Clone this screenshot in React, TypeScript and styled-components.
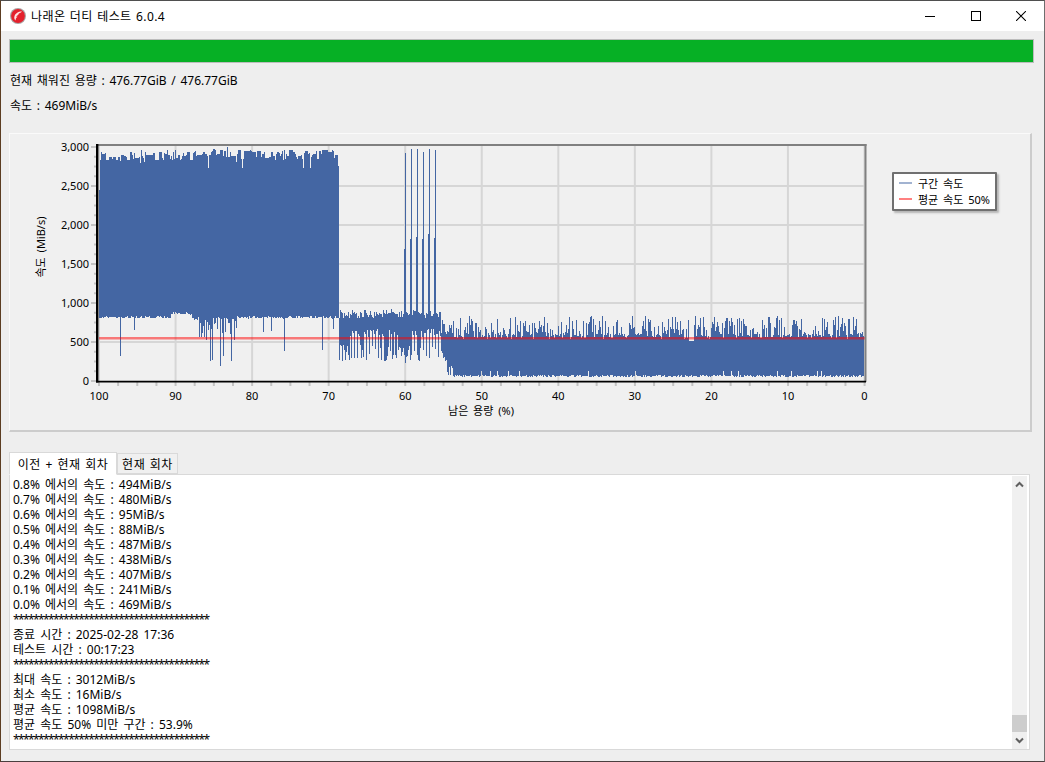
import styled, { createGlobalStyle } from "styled-components";

const FONT = `"Noto Sans", "Noto Sans CJK KR", sans-serif`;
const BLUE = "#4466a3";
const GRID = "#d6d6d6";
const TICK = "#c4c4c4";

const GlobalStyle = createGlobalStyle`
  html, body {
    margin: 0;
    padding: 0;
    background: #eeeeee;
    font-family: ${FONT};
    font-size: 12px;
    color: #000;
  }
`;

// seeded so the picture is the same on each load
const makeRandom = (seed: number) => () => {
  seed = (seed + 0x6d2b79f5) | 0;
  let t = Math.imul(seed ^ (seed >>> 15), 1 | seed);
  t = (t + Math.imul(t ^ (t >>> 7), 61 | t)) ^ t;
  return ((t ^ (t >>> 14)) >>> 0) / 4294967296;
};

const FAST_DIPS: Record<number, number> = {
  120: 356, 134: 330, 199: 337, 201: 337, 206: 340, 210: 361, 212: 360, 220: 366, 223: 356,
  231: 361, 234: 340, 236: 328, 263: 332, 271: 331, 284: 351, 322: 350, 333: 329,
};

const SPIKES = [
  { x: 405, thin: 153, thick: 249 },
  { x: 411, thin: 149, thick: 239 },
  { x: 417, thin: 149, thick: 237 },
  { x: 423, thin: 152, thick: 239 },
  { x: 429, thin: 149, thick: 234 },
  { x: 435, thin: 150, thick: 238 },
];

const buildSeries = () => {
  const rnd = makeRandom(41);
  const cols: string[] = [];
  let top = 154;
  for (let x = 99; x < 864; x++) {
    let hi = 0;
    let lo = 0;
    if (x < 339) {
      // fast cache part
      const shift = x > 195 && x < 235 ? -3 : x < 130 ? 1 : 0;
      if (rnd() < 0.6) top = 150 + shift + rnd() * 10;
      hi = top;
      if (rnd() < 0.02) hi += 6;
      if (x < 100) hi = 190;
      else if ([208, 242, 303, 310].includes(x)) hi = 168;
      else if (x === 338) hi = 166;
      lo = 316 + rnd() * 2.5;
      if (x > 170 && x < 192) lo = 312 + rnd() * 3;
      if (x >= 192 && x < 199) lo = 317 + rnd() * 5;
      if (x >= 199 && x < 236) lo = 317 + Math.pow(rnd(), 2) * 20;
      if (FAST_DIPS[x]) lo = FAST_DIPS[x];
    } else if (x < 441) {
      // after the cache, solid with a comb of teeth below
      hi = 309 + rnd() * 9;
      if (x < 350) {
        lo = 343 + rnd() * 20;
      } else if (x >= 398 && x < 412) {
        lo = 345 + rnd() * 20;
      } else if (x % 3 === 0 || rnd() < 0.12) {
        lo = 345 + rnd() * 17;
      } else {
        lo = 328 + rnd() * 9;
      }
    } else if (x < 453) {
      hi = 320 + rnd() * 14;
      lo = x < 447 ? 350 + rnd() * 12 : 366 + rnd() * 10;
    } else {
      // slow part, spiky top over a solid block
      const r = rnd();
      hi = r < 0.32 ? 316 + rnd() * 10 : r < 0.65 ? 326 + rnd() * 9 : 334 + rnd() * 5;
      lo = 375 + rnd() * 2;
      if (rnd() < 0.03) lo = 371;
      if (x > 688 && x < 694) hi = 341;
    }
    cols.push(`M${x + 0.5} ${hi.toFixed(1)}V${lo.toFixed(1)}`);
  }
  return cols.join("");
};

const SERIES = buildSeries();

const xPos = (pct: number) => 99 + ((100 - pct) / 100) * 765.5;
const yPos = (val: number) => 381 - (val / 500) * 39;

const X_LABELS = [100, 90, 80, 70, 60, 50, 40, 30, 20, 10, 0];
const Y_LABELS = [
  { v: 3000, t: "3,000" },
  { v: 2500, t: "2,500" },
  { v: 2000, t: "2,000" },
  { v: 1500, t: "1,500" },
  { v: 1000, t: "1,000" },
  { v: 500, t: "500" },
  { v: 0, t: "0" },
];

const SPEED_ROWS = [
  "0.8% 에서의 속도 : 494MiB/s",
  "0.7% 에서의 속도 : 480MiB/s",
  "0.6% 에서의 속도 : 95MiB/s",
  "0.5% 에서의 속도 : 88MiB/s",
  "0.4% 에서의 속도 : 487MiB/s",
  "0.3% 에서의 속도 : 438MiB/s",
  "0.2% 에서의 속도 : 407MiB/s",
  "0.1% 에서의 속도 : 241MiB/s",
  "0.0% 에서의 속도 : 469MiB/s",
];
const STARS = "*".repeat(39);
const LOG_ROWS = [
  ...SPEED_ROWS,
  STARS,
  "종료 시간 : 2025-02-28 17:36",
  "테스트 시간 : 00:17:23",
  STARS,
  "최대 속도 : 3012MiB/s",
  "최소 속도 : 16MiB/s",
  "평균 속도 : 1098MiB/s",
  "평균 속도 50% 미만 구간 : 53.9%",
  STARS,
];

const AppIcon = () => (
  <svg width="16" height="16" viewBox="0 0 16 16">
    <circle cx="8" cy="8" r="8" fill="#a9a3a3" />
    <circle cx="8" cy="8" r="6.9" fill="#e4202c" />
    <path d="M12 3.6C8.600 3.400 5 5.400 4.300 9c-.2 1.400.3 2.600 1.300 3.400.1-1.800.8-3 2.200-3.600-.6-.2-1.200-.2-1.600 0 .4-1.200 1.500-1.900 2.800-2.100-.4-.2-.9-.3-1.300-.2C9 5.300 10.600 5 12 3.600z" fill="#ffe3e3" />
  </svg>
);

const MinimizeIcon = () => (
  <svg width="10" height="10" viewBox="0 0 10 10" shapeRendering="crispEdges">
    <path d="M0 5.5H10" stroke="#000" />
  </svg>
);

const MaximizeIcon = () => (
  <svg width="10" height="10" viewBox="0 0 10 10" shapeRendering="crispEdges">
    <rect x="0.5" y="0.5" width="9" height="9" fill="none" stroke="#000" />
  </svg>
);

const CloseIcon = () => (
  <svg width="10" height="10" viewBox="0 0 10 10">
    <path d="M0 0L10 10M10 0L0 10" stroke="#000" strokeWidth="1.05" />
  </svg>
);

const Chevron = ({ down }: { down?: boolean }) => (
  <svg width="9" height="7" viewBox="0 0 9 7">
    <path d={down ? "M1 1.5L4.5 5L8 1.5" : "M1 5.5L4.5 2L8 5.5"} fill="none" stroke="#606060" strokeWidth="2" />
  </svg>
);

function yTickStart(i: number) {
  return i % 4 === 0 ? 91 : 94;
}

const Chart = () => (
  <ChartSvg width="880" height="296" viewBox="10 134 880 296">
    {X_LABELS.map((p) => (
      <line key={p} x1={xPos(p)} x2={xPos(p)} y1={146} y2={381} stroke={GRID} strokeWidth="2" />
    ))}
    {Y_LABELS.slice(1, 6).map((l) => (
      <line key={l.v} x1={99} x2={865} y1={yPos(l.v)} y2={yPos(l.v)} stroke={GRID} strokeWidth="2" />
    ))}

    <path d={SERIES} stroke={BLUE} strokeWidth="1" fill="none" shapeRendering="crispEdges" />
    {SPIKES.map((s) => (
      <g key={s.x} shapeRendering="crispEdges">
        <line x1={s.x + 0.5} x2={s.x + 0.5} y1={s.thin} y2={320} stroke={BLUE} />
        <line x1={s.x - 0.5} x2={s.x - 0.5} y1={s.thick} y2={320} stroke={BLUE} />
      </g>
    ))}
    <line x1={99} x2={865} y1={338.2} y2={338.2} stroke="#ff0000" strokeOpacity="0.5" strokeWidth="2.4" />

    {Array.from({ length: 25 }, (_, i) => (
      <line key={i} x1={yTickStart(i)} x2={96} y1={147 + i * 9.75} y2={147 + i * 9.75} stroke={TICK} strokeWidth="2" />
    ))}
    {Array.from({ length: 41 }, (_, i) => (
      <line key={i} x1={99 + i * 19.14} x2={99 + i * 19.14} y1={382} y2={386} stroke={TICK} strokeWidth="2" />
    ))}

    <line x1={96} x2={866.5} y1={145} y2={145} stroke="#808080" strokeWidth="2" />
    <line x1={865.5} x2={865.5} y1={144} y2={382} stroke="#808080" strokeWidth="2" />
    <line x1={97.2} x2={97.2} y1={144} y2={382.5} stroke="#000" strokeWidth="2.4" />
    <line x1={96} x2={866} y1={381.7} y2={381.7} stroke="#000" strokeWidth="1.8" />

    {Y_LABELS.map((l) => (
      <AxisText key={l.v} x={89} y={yPos(l.v) + 4} textAnchor="end">
        {l.t}
      </AxisText>
    ))}
    {X_LABELS.map((p) => (
      <AxisText key={p} x={xPos(p)} y={400} textAnchor="middle">
        {p}
      </AxisText>
    ))}
    <AxisText x={481} y={415} textAnchor="middle">
      남은 용량 (%)
    </AxisText>
    <AxisText transform="translate(45 247) rotate(-90)" textAnchor="middle">
      속도 (MiB/s)
    </AxisText>
  </ChartSvg>
);

const App = () => (
  <>
    <GlobalStyle />
    <Window>
      <TitleBar>
        <AppIcon />
        <TitleText>나래온 더티 테스트 6.0.4</TitleText>
        <WindowButtons>
          <WindowButton><MinimizeIcon /></WindowButton>
          <WindowButton><MaximizeIcon /></WindowButton>
          <WindowButton><CloseIcon /></WindowButton>
        </WindowButtons>
      </TitleBar>

      <Content>
        <ProgressTrack>
          <ProgressFill />
        </ProgressTrack>
        <InfoBlock>
          <InfoLine>현재 채워진 용량 : 476.77GiB / 476.77GiB</InfoLine>
          <InfoLine>속도 : 469MiB/s</InfoLine>
        </InfoBlock>

        <ChartPanel>
          <Chart />
          <Legend>
            <LegendRow>
              <LegendSwatch $color="#a2b3d1" />
              구간 속도
            </LegendRow>
            <LegendRow>
              <LegendSwatch $color="#ff8080" />
              평균 속도 50%
            </LegendRow>
          </Legend>
        </ChartPanel>

        <TabStrip>
          <Tab $active>이전 + 현재 회차</Tab>
          <Tab>현재 회차</Tab>
        </TabStrip>
        <LogBox>
          <LogText>
            {LOG_ROWS.map((row, i) => (
              <LogRow key={i} $stars={row === STARS}>
                {row}
              </LogRow>
            ))}
          </LogText>
          <ScrollBar>
            <ScrollArrow><Chevron /></ScrollArrow>
            <ScrollTrack>
              <ScrollThumb />
            </ScrollTrack>
            <ScrollArrow><Chevron down /></ScrollArrow>
          </ScrollBar>
        </LogBox>
      </Content>
    </Window>
  </>
);

export default App;

const Window = styled.div`
  width: 1045px;
  height: 762px;
  box-sizing: border-box;
  background: #eeeeee;
  border-style: solid;
  border-width: 1px;
  border-color: #4f4f4f #6e6e6e #4a3f3f #5c3d22;
  overflow: hidden;
`;

const TitleBar = styled.div`
  display: flex;
  align-items: center;
  height: 30px;
  padding-left: 9px;
  background: #ffffff;
`;

const TitleText = styled.span`
  margin-left: 5px;
  font-size: 12px;
  letter-spacing: 0.4px;
  word-spacing: 1px;
`;

const WindowButtons = styled.div`
  display: flex;
  margin-left: auto;
  height: 100%;
`;

const WindowButton = styled.div`
  display: flex;
  align-items: center;
  justify-content: center;
  width: 45.5px;
  height: 100%;
`;

const Content = styled.div`
  display: flex;
  flex-direction: column;
  align-items: flex-start;
  padding: 8px 0 0 8px;
`;

const ProgressTrack = styled.div`
  box-sizing: border-box;
  width: 1025px;
  height: 24px;
  border: 1px solid #bcbcbc;
  background: #e6e6e6;
`;

const ProgressFill = styled.div`
  width: 100%;
  height: 100%;
  background: #06b025;
`;

const InfoBlock = styled.div`
  padding: 4px 0 16px 1px;
`;

const InfoLine = styled.div`
  display: flex;
  align-items: center;
  height: 25px;
  white-space: pre;
  word-spacing: 1.6px;
`;

const ChartPanel = styled.section`
  display: flex;
  align-items: flex-start;
  box-sizing: border-box;
  width: 1023px;
  height: 299px;
  background: #f0f0f0;
  border-style: solid;
  border-width: 1px 2px 2px 1px;
  border-color: #fafafa #cccccc #cccccc #fafafa;
`;

const ChartSvg = styled.svg`
  display: block;
  flex: none;
`;

const AxisText = styled.text`
  font-family: ${FONT};
  font-size: 11px;
  word-spacing: 2px;
  fill: #000;
`;

const Legend = styled.div`
  box-sizing: border-box;
  width: 105px;
  height: 39px;
  margin: 38px 0 0 2px;
  padding: 1px 0 0 5px;
  background: #ffffff;
  border: 2px solid #707070;
  border-radius: 1px;
  box-shadow: 2px 2px 2px #b5b5b5;
  font-size: 11px;
  word-spacing: 2px;
`;

const LegendRow = styled.div`
  display: flex;
  align-items: center;
  gap: 6px;
  height: 16px;
  white-space: nowrap;
`;

const LegendSwatch = styled.span<{ $color: string }>`
  width: 13px;
  height: 2px;
  background: ${(p) => p.$color};
`;

const TabStrip = styled.div`
  display: flex;
  align-items: flex-end;
  height: 23px;
  margin-top: 19px;
  position: relative;
  z-index: 1;
`;

const Tab = styled.div<{ $active?: boolean }>`
  display: flex;
  align-items: center;
  justify-content: center;
  box-sizing: border-box;
  width: ${(p) => (p.$active ? "108px" : "61px")};
  height: ${(p) => (p.$active ? "23px" : "21px")};
  margin-bottom: ${(p) => (p.$active ? "-1px" : "0")};
  background: ${(p) => (p.$active ? "#ffffff" : "#f0f0f0")};
  border: 1px solid #d9d9d9;
  border-bottom-color: ${(p) => (p.$active ? "#ffffff" : "#d9d9d9")};
  font-size: 12px;
  letter-spacing: 0.5px;
  word-spacing: 1px;
  white-space: pre;
`;

const LogBox = styled.div`
  display: flex;
  box-sizing: border-box;
  width: 1021px;
  height: 276px;
  background: #ffffff;
  border: 1px solid #d9d9d9;
  padding: 1px 2px 0 3px;
`;

const LogText = styled.div`
  flex: 1;
  overflow: hidden;
  padding-top: 1px;
`;

const LogRow = styled.div<{ $stars?: boolean }>`
  height: 15px;
  line-height: 15px;
  font-size: 12px;
  white-space: pre;
  word-spacing: 2px;
  letter-spacing: ${(p) => (p.$stars ? "-1.6px" : "0")};
`;

const ScrollBar = styled.div`
  display: flex;
  flex-direction: column;
  width: 15px;
  height: 273px;
  background: #f0f0f0;
`;

const ScrollArrow = styled.div`
  display: flex;
  align-items: center;
  justify-content: center;
  height: 17px;
  flex: none;
`;

const ScrollTrack = styled.div`
  display: flex;
  flex-direction: column;
  justify-content: flex-end;
  flex: 1;
`;

const ScrollThumb = styled.div`
  height: 17px;
  background: #cdcdcd;
`;
